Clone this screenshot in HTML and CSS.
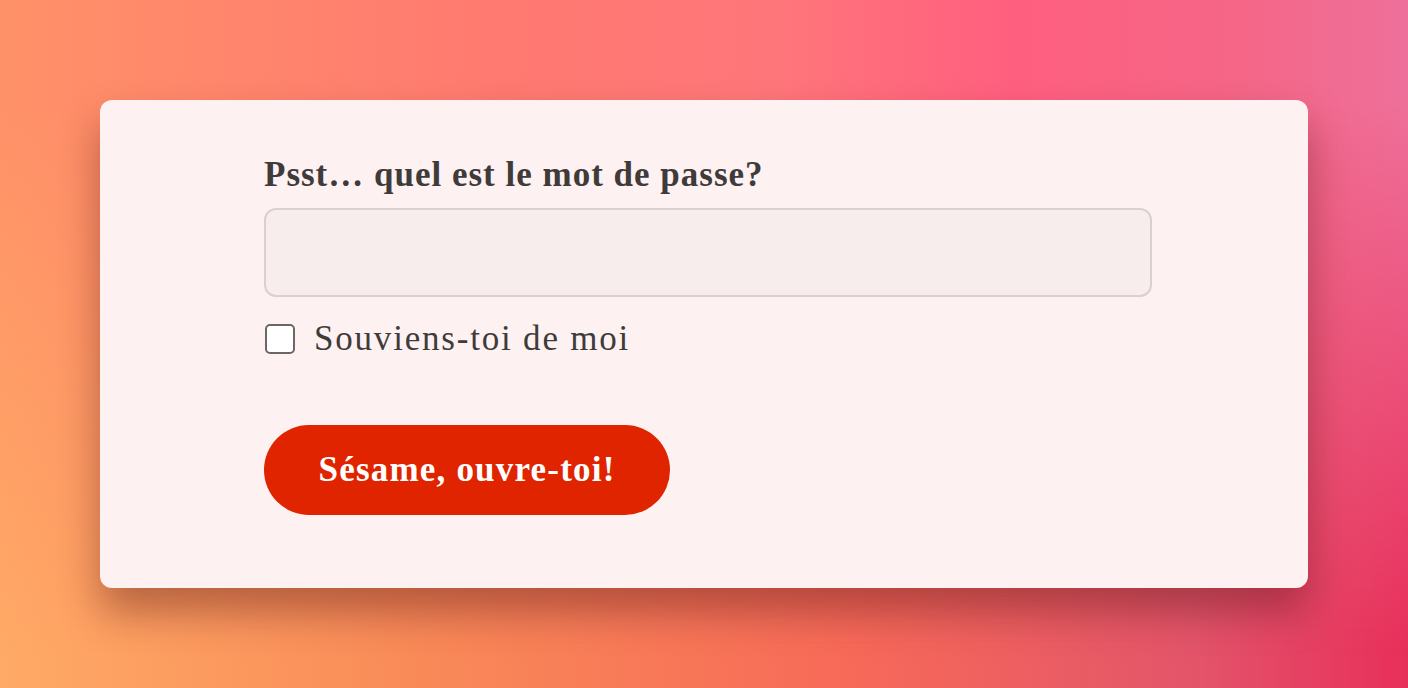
FILE: index.html
```html
<!DOCTYPE html>
<html lang="fr">
<head>
<meta charset="utf-8">
<title>Connexion</title>
<link rel="stylesheet" href="styles.css">
</head>
<body>
<main class="stage">
  <form class="card">
    <label class="label" for="pw">Psst… quel est le mot de passe?</label>
    <input class="field" id="pw" type="password">
    <label class="remember">
      <span class="box"></span>
      <span class="remember-text">Souviens-toi de moi</span>
    </label>
    <button class="btn" type="button">Sésame, ouvre-toi!</button>
  </form>
</main>
</body>
</html>
```
FILE: styles.css
```css
html, body {
  margin: 0;
  height: 100%;
}
body {
  font-family: "Liberation Serif", "DejaVu Serif", serif;
  background: linear-gradient(to right, #ffaa66 0%, #f98a58 30%, #f76a58 60%, #e3546a 85%, #e82f5a 100%);
  position: relative;
  overflow: hidden;
}
body::before {
  content: "";
  position: absolute;
  inset: 0;
  background: linear-gradient(to right, #ff9168 0%, #ff7a70 35%, #ff767a 55%, #ff5f7f 72%, #f56687 88%, #ee709a 100%);
  -webkit-mask-image: linear-gradient(to bottom, #000 0%, #000 15%, transparent 95%);
  mask-image: linear-gradient(to bottom, #000 0%, #000 15%, transparent 95%);
}
.stage {
  position: relative;
  height: 688px;
  display: flex;
  align-items: center;
  justify-content: center;
}
.card {
  box-sizing: border-box;
  width: 1208px;
  height: 488px;
  background: #fdf2f1;
  border-radius: 12px;
  box-shadow: 0 24px 40px rgba(70, 10, 10, 0.38);
  padding: 51px 156px 0 164px;
  display: flex;
  flex-direction: column;
  align-items: flex-start;
  color: #3f3b3a;
}
.label {
  font-weight: 700;
  font-size: 35px;
  letter-spacing: 1px;
  line-height: 48px;
  margin-bottom: 9px;
}
.field {
  box-sizing: border-box;
  width: 888px;
  height: 89px;
  border: 2px solid #dbd0cf;
  border-radius: 12px;
  background: #f8eded;
  margin: 0;
  font: inherit;
}
.remember {
  display: flex;
  align-items: center;
  gap: 19px;
  margin-top: 22px;
  font-size: 35px;
  letter-spacing: 1.8px;
  line-height: 40px;
}
.box {
  box-sizing: border-box;
  width: 30px;
  height: 30px;
  border: 2px solid #6b6666;
  border-radius: 5px;
  background: #ffffff;
  margin-left: 1px;
}
.btn {
  margin-top: 66px;
  height: 90px;
  width: 406px;
  border: 0;
  border-radius: 45px;
  background: #e02400;
  color: #ffffff;
  font-family: inherit;
  font-weight: 700;
  font-size: 35px;
  letter-spacing: 1.2px;
  padding: 0;
}
```
